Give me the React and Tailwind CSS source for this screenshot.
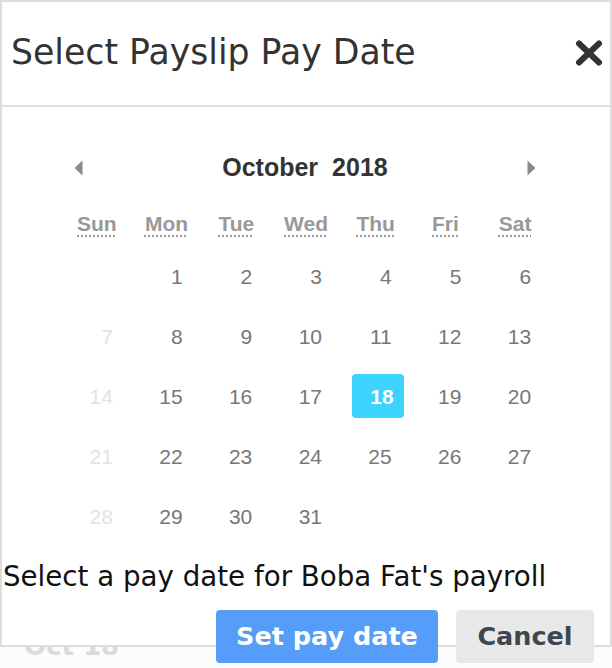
import { useState } from 'react'

const DAY_NAMES = ['Sun', 'Mon', 'Tue', 'Wed', 'Thu', 'Fri', 'Sat']

// October 2018 starts on a Monday
const WEEKS = [
  [null, 1, 2, 3, 4, 5, 6],
  [7, 8, 9, 10, 11, 12, 13],
  [14, 15, 16, 17, 18, 19, 20],
  [21, 22, 23, 24, 25, 26, 27],
  [28, 29, 30, 31, null, null, null],
]

function DayCell({ day, col, selected, onPick }) {
  if (!day) return <div className="h-[60px]" />
  const disabled = col === 0
  const isSelected = day === selected

  return (
    <div className="h-[60px] flex items-center justify-center pl-[4px]">
      <button
        onClick={() => !disabled && onPick(day)}
        className={`w-[52px] h-[44px] rounded-[4px] flex items-center justify-end text-[21px] leading-none ${
          isSelected
            ? 'bg-[#3cd3fc] text-white font-bold pr-[10px]'
            : disabled
              ? 'text-[#e2e2e2] pr-[12px]'
              : 'text-[#777777] pr-[12px]'
        }`}
      >
        {day}
      </button>
    </div>
  )
}

function Arrow({ dir }) {
  return (
    <svg width="9" height="16" viewBox="0 0 9 16">
      {dir === 'left'
        ? <polygon points="8.5,0.5 8.5,15.5 0.5,8" fill="#8a8a8a" />
        : <polygon points="0.5,0.5 0.5,15.5 8.5,8" fill="#8a8a8a" />}
    </svg>
  )
}

export default function App() {
  const [selected, setSelected] = useState(18)

  return (
    <div className="w-[612px] h-[668px] bg-[#fcfcfc] overflow-hidden font-['DejaVu_Sans',sans-serif]">
      {/* Modal */}
      <div className="bg-white border-2 border-[#dddddd]">
        {/* Header */}
        <div className="h-[105px] flex items-center justify-between pl-[9px] pr-[6px] pb-[2px] border-b-2 border-[#dddddd]">
          <h2 className="text-[#333333] text-[34.7px]">Select Payslip Pay Date</h2>
          <button className="w-[30px] h-[30px] flex items-center justify-center">
            <svg width="28" height="26" viewBox="0 0 28 26">
              <path d="M4 3.5 L24 22.5 M24 3.5 L4 22.5" stroke="#333333" strokeWidth="6" strokeLinecap="round" />
            </svg>
          </button>
        </div>

        {/* Calendar */}
        <div className="pt-[41px] font-['Liberation_Sans',Arial,sans-serif]">
          <div className="w-[488px] mx-auto">
            <div className="h-[40px] flex items-center justify-between pl-[12px] pr-[14px]">
              <button><Arrow dir="left" /></button>
              <div className="flex gap-[14px] text-[25px] font-bold text-[#333333]">
                <span>October</span>
                <span>2018</span>
              </div>
              <button><Arrow dir="right" /></button>
            </div>

            <div className="mt-[16px] h-[40px] grid grid-cols-7 items-center">
              {DAY_NAMES.map(d => (
                <div key={d} className="text-center">
                  <abbr
                    title={d}
                    className="text-[21px] font-bold text-[#999999] underline decoration-dotted decoration-[#999999] underline-offset-[4px]"
                  >
                    {d}
                  </abbr>
                </div>
              ))}
            </div>

            <div className="mt-[2px]">
              {WEEKS.map((week, i) => (
                <div key={i} className="grid grid-cols-7">
                  {week.map((day, col) => (
                    <DayCell key={col} day={day} col={col} selected={selected} onPick={setSelected} />
                  ))}
                </div>
              ))}
            </div>
          </div>
        </div>

        {/* Footer */}
        <p className="mt-[16px] pl-[1px] h-[30px] flex items-center text-[27.7px] text-[#111111]">
          Select a pay date for Boba Fat's payroll
        </p>
        <div className="mt-[18px] -mb-[18px] flex justify-end gap-[18px] pr-[16px]">
          <button className="w-[222px] h-[53px] rounded-[4px] bg-[#559df9] text-white text-[25.5px] font-bold">
            Set pay date
          </button>
          <button className="w-[138px] h-[53px] rounded-[4px] bg-[#e8e8e8] text-[#3c4650] text-[25.5px] font-bold">
            Cancel
          </button>
        </div>
      </div>

      {/* Page behind the modal */}
      <div className="h-[21px] overflow-hidden pl-[24px]">
        <div className="-mt-[20px] text-[26px] font-bold text-[#dadada]">Oct 18</div>
      </div>
    </div>
  )
}
